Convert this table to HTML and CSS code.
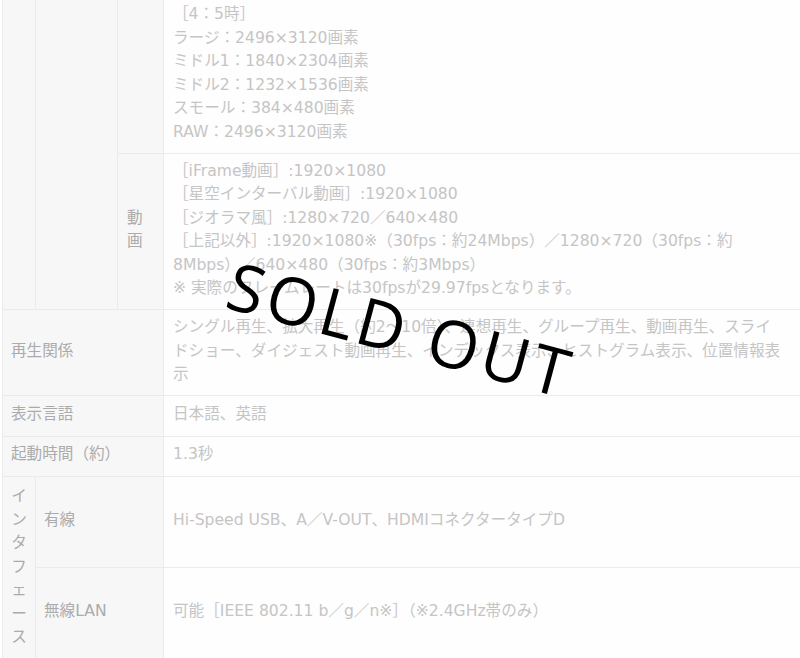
FILE: index.html
```html
<!DOCTYPE html>
<html lang="ja">
<head>
<meta charset="utf-8">
<title>仕様</title>
<link rel="stylesheet" href="styles.css">
</head>
<body>
<div class="page">
  <table class="spec">
    <colgroup>
      <col class="c1">
      <col class="c2">
      <col class="c3">
      <col class="c4">
    </colgroup>
    <tr class="still">
      <th rowspan="2" class="blank"></th>
      <th rowspan="2" class="blank"></th>
      <th class="lbl"></th>
      <td class="val">［4：5時］<br>ラージ：2496×3120画素<br>ミドル1：1840×2304画素<br>ミドル2：1232×1536画素<br>スモール：384×480画素<br>RAW：2496×3120画素</td>
    </tr>
    <tr>
      <th class="lbl">動<br>画</th>
      <td class="val">［iFrame動画］:1920×1080<br>［星空インターバル動画］:1920×1080<br>［ジオラマ風］:1280×720／640×480<br>［上記以外］:1920×1080※（30fps：約24Mbps）／1280×720（30fps：約8Mbps）／640×480（30fps：約3Mbps）<br>※ 実際のフレームレートは30fpsが29.97fpsとなります。</td>
    </tr>
    <tr>
      <th colspan="3">再生関係</th>
      <td class="val">シングル再生、拡大再生（約2～10倍）、連想再生、グループ再生、動画再生、スライドショー、ダイジェスト動画再生、インデックス表示、ヒストグラム表示、位置情報表示</td>
    </tr>
    <tr>
      <th colspan="3">表示言語</th>
      <td class="val">日本語、英語</td>
    </tr>
    <tr>
      <th colspan="3">起動時間（約）</th>
      <td class="val">1.3秒</td>
    </tr>
    <tr class="tall">
      <th rowspan="2" class="vert">イ<br>ン<br>タ<br>フ<br>ェ<br>ー<br>ス</th>
      <th colspan="2">有線</th>
      <td class="val">Hi-Speed USB、A／V-OUT、HDMIコネクタータイプD</td>
    </tr>
    <tr class="tall">
      <th colspan="2">無線LAN</th>
      <td class="val">可能［IEEE 802.11 b／g／n※］（※2.4GHz帯のみ）</td>
    </tr>
  </table>
  <div class="stamp">SOLD OUT</div>
</div>
</body>
</html>
```

FILE: styles.css
```css
html, body {
  margin: 0;
  padding: 0;
  background: #fff;
}

.page {
  position: relative;
  width: 800px;
  height: 658px;
  overflow: hidden;
  font-family: "DejaVu Sans", "Noto Sans CJK JP", sans-serif;
  font-size: 15.6px;
  line-height: 23.5px;
}

.spec {
  border-collapse: collapse;
  table-layout: fixed;
  width: 806px;
  margin: -4px 0 0 2px;
}

.c1 { width: 33px; }
.c2 { width: 82px; }
.c3 { width: 46px; }
.c4 { width: 645px; }

.spec tr {
  height: 40.5px;
}

.spec th,
.spec td {
  border: 1px solid #ebebeb;
  padding: 6px 10px 8.5px 8px;
  vertical-align: middle;
  text-align: left;
  font-weight: normal;
}

.spec th {
  background: #f7f7f7;
  color: #ababab;
}

.spec td.val {
  background: #fefefe;
  color: #c5c5c5;
  padding-left: 9px;
  padding-right: 24px;
}

.spec th.lbl {
  padding-left: 9px;
}

.spec th.vert {
  text-align: center;
  padding: 8px 0;
}

.spec tr.tall {
  height: 90px;
}

.stamp {
  position: absolute;
  left: 401px;
  top: 328px;
  transform: translate(-50%, -50%) rotate(15deg);
  font-family: "Open Sans", sans-serif;
  font-size: 66px;
  line-height: 1;
  letter-spacing: 4px;
  color: #000;
  white-space: nowrap;
}
```
